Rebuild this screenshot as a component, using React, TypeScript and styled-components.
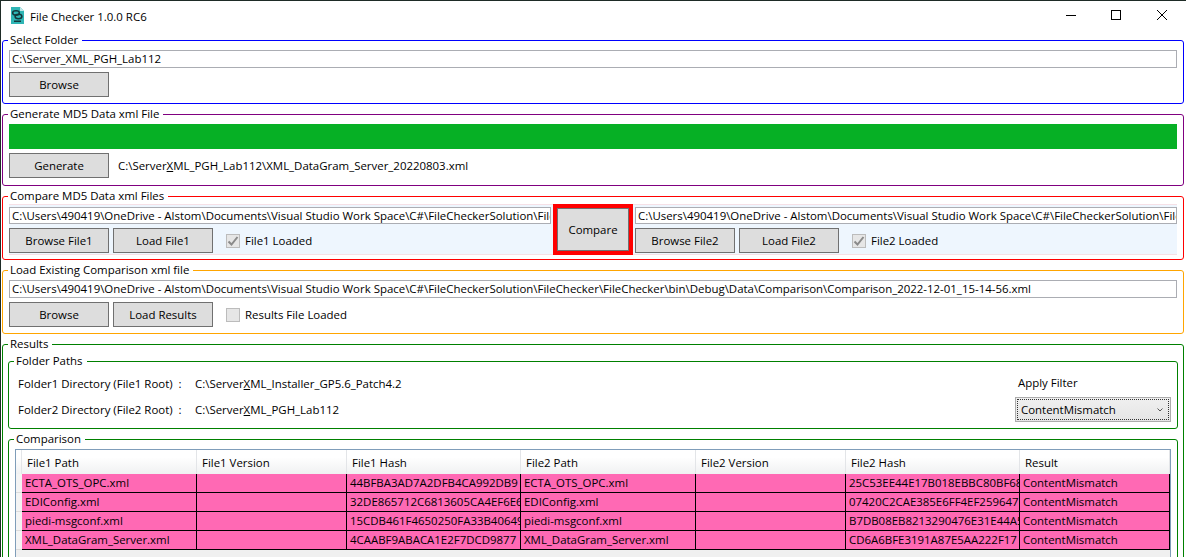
import React from "react";
import styled, { createGlobalStyle } from "styled-components";

const Global = createGlobalStyle`
  html, body { margin: 0; padding: 0; background: #fff; }
  body { font-family: "Open Sans", "Noto Sans", sans-serif; font-size: 11.45px; color: #000; }
  * { box-sizing: border-box; }
`;

const Win = styled.div`
  width: 1186px; height: 557px; overflow: hidden; display: flex; flex-direction: column;
  background: #fff; border-top: 1px solid #1e2b26; border-left: 1px solid #1e2b26;
`;
const TitleBar = styled.div`
  height: 31px; flex: none; display: flex; align-items: center; padding-left: 10px; gap: 6px;
`;
const TitleIcon = styled.span` display: flex; margin-bottom: 3px; `;
const TitleText = styled.span` flex: 1; margin-bottom: 1px; `;
const WinButtons = styled.div`
  display: flex; padding-right: 19px; gap: 35px; align-items: center; margin-bottom: 3px;
  svg:nth-child(2) { margin-right: 1px; }
`;

const Group = styled.fieldset<{ $c: string }>`
  flex: none; margin: 0 2px 2px 1px; padding: 2px 6px 6px; border: 1px solid ${p => p.$c}; border-radius: 3px; min-width: 0;
`;
const GenerateGroup = styled(Group)` padding-bottom: 7px; `;
const CompareGroup = styled(Group)` padding: 0 6px 4px; `;
const ResultsGroup = styled(Group)` padding: 1px 5px 0; `;
const Sub = styled(Group)` margin: 0 0 2px 0; padding: 0 6px 6px; `;
const Legend = styled.legend`
  margin-left: -1px; padding: 0 4px 0 2px; line-height: 16px; height: 16px; white-space: nowrap;
`;
const ResultsLegend = styled(Legend)` margin-left: 0; `;
const Input = styled.div`
  height: 18px; border: 1px solid #abadb3; background: #fff; padding-left: 2px; line-height: 16px;
  white-space: nowrap; overflow: hidden; min-width: 0;
`;
const CompactInput = styled(Input)` height: 17px; line-height: 15px; `;
const Row = styled.div` display: flex; align-items: center; gap: 4px; margin-top: 4px; height: 25px; `;
const Btn = styled.button`
  width: 100px; height: 25px; border: 1px solid #707070; background: #dddddd; font: inherit; color: #000; padding: 0; flex: none;
`;
const Check = styled.label`
  display: flex; align-items: center; gap: 5px; margin-left: 9px; white-space: nowrap;
`;
const Box = styled.span`
  width: 14px; height: 14px; border: 1px solid #bcbcbc; background: #e6e6e6; display: flex; align-items: center; justify-content: center;
`;
const Progress = styled.div` height: 25px; background: #06b025; `;
const PathLabel = styled.span` margin-left: 5px; white-space: nowrap; `;

const ComparePanel = styled.div`
  display: flex; align-items: stretch; gap: 2px; height: 51px;
  background: #eef6fe; border-top: 1px solid #f6e0e6; border-bottom: 1px solid #f6e0e6;
`;
const Side = styled.div` flex: 1; min-width: 0; padding-top: 2px; `;
const CompareBtn = styled.button`
  width: 80px; height: 51px; flex: none; border: 4px solid #ff0000; margin-top: -1px; background: #dddddd;
  box-shadow: inset 0 0 0 1px #707070; font: inherit; color: #000; padding: 0;
`;

const PathsGrid = styled.div`
  display: flex; justify-content: space-between; height: 53px;
`;
const PathsLeft = styled.div`
  display: grid; grid-template-columns: 177px auto; grid-auto-rows: 26px; padding: 1px 0 0 3px; align-content: start; align-items: center;
`;
const Filter = styled.div` width: 156px; padding-top: 6px; `;
const FilterLabel = styled.div` padding-left: 3px; line-height: 16px; height: 22px; `;
const Select = styled.div`
  height: 25px; border: 1px solid #acacac; background: linear-gradient(#f0f0f0, #e5e5e5); padding: 1px;
`;
const SelectInner = styled.div`
  height: 21px; border: 1px dotted #333; padding: 0 5px 0 3px; display: flex; justify-content: space-between; align-items: center;
`;

const Table = styled.div`
  height: 140px; margin-top: 2px; background: #f0f0f0; border: 1px solid #7f9db9; border-bottom: 0; overflow: hidden;
`;
const cols = "175px 150px 174px 175px 150px 174px 150px";
const Head = styled.div`
  display: grid; grid-template-columns: 6px ${cols}; height: 24px; background: linear-gradient(#fff 0 30%, #f0f1f2);
`;
const HeadCell = styled.div`
  padding-left: 5px; line-height: 26px; border-right: 1px solid #e3e5e8; white-space: nowrap; overflow: hidden;
`;
const DataRow = styled.div`
  display: grid; grid-template-columns: 6px ${cols}; height: 19px;
`;
const Gutter = styled.div` border-bottom: 1px solid #dcdcdc; background: #f4f4f4; `;
const Cell = styled.div`
  background: #ff69b4; border-right: 1px solid #000; border-bottom: 1px solid #000; padding-left: 3px; line-height: 18px;
  white-space: nowrap; overflow: hidden;
`;

const heads = ["File1 Path", "File1 Version", "File1 Hash", "File2 Path", "File2 Version", "File2 Hash", "Result"];
const rows = [
  ["ECTA_OTS_OPC.xml", "", "44BFBA3AD7A2DFB4CA992DB9", "ECTA_OTS_OPC.xml", "", "25C53EE44E17B018EBBC80BF68", "ContentMismatch"],
  ["EDIConfig.xml", "", "32DE865712C6813605CA4EF6E6", "EDIConfig.xml", "", "07420C2CAE385E6FF4EF259647", "ContentMismatch"],
  ["piedi-msgconf.xml", "", "15CDB461F4650250FA33B40649", "piedi-msgconf.xml", "", "B7DB08EB8213290476E31E44A5", "ContentMismatch"],
  ["XML_DataGram_Server.xml", "", "4CAABF9ABACA1E2F7DCD9877", "XML_DataGram_Server.xml", "", "CD6A6BFE3191A87E5AA222F17", "ContentMismatch"],
];

const longPath = "C:\\Users\\490419\\OneDrive - Alstom\\Documents\\Visual Studio Work Space\\C#\\FileCheckerSolution\\FileChecker\\FileChecker\\bin\\Debug\\Data";

const AppIcon = () => (
  <svg width="13" height="17" viewBox="0 0 13 17">
    <path d="M0 0h9l4 4v13H0z" fill="#2fb5b5" />
    <path d="M9 0l4 4H9z" fill="#bfe8e8" />
    <ellipse cx="5" cy="6" rx="3.4" ry="2.2" fill="none" stroke="#14383c" strokeWidth="1.5" />
    <ellipse cx="7.5" cy="9.5" rx="3.4" ry="2.2" fill="none" stroke="#14383c" strokeWidth="1.5" />
    <rect x="3" y="13.5" width="7" height="1.5" fill="#14383c" />
  </svg>
);
const Tick = () => (
  <svg width="12" height="12" viewBox="0 0 12 12">
    <path d="M1.5 6.5l3 3 6-7.5" fill="none" stroke="#8a8a8a" strokeWidth="2" />
  </svg>
);

export default function App() {
  return (
    <Win>
      <Global />
      <TitleBar>
        <TitleIcon><AppIcon /></TitleIcon>
        <TitleText>File Checker 1.0.0 RC6</TitleText>
        <WinButtons>
          <svg width="10" height="10" viewBox="0 0 10 10"><path d="M0 5.5h10" stroke="#000" /></svg>
          <svg width="10" height="10" viewBox="0 0 10 10"><rect x=".5" y=".5" width="9" height="9" fill="none" stroke="#000" /></svg>
          <svg width="10" height="10" viewBox="0 0 10 10"><path d="M0 0l10 10M10 0L0 10" stroke="#000" /></svg>
        </WinButtons>
      </TitleBar>

      <Group $c="#0000ff">
        <Legend>Select Folder</Legend>
        <Input>C:\Server_XML_PGH_Lab112</Input>
        <Row><Btn>Browse</Btn></Row>
      </Group>

      <GenerateGroup $c="#800080">
        <Legend>Generate MD5 Data xml File</Legend>
        <Progress />
        <Row>
          <Btn>Generate</Btn>
          <PathLabel>C:\Server<u>X</u>ML_PGH_Lab112\XML_DataGram_Server_20220803.xml</PathLabel>
        </Row>
      </GenerateGroup>

      <CompareGroup $c="#ff0000">
        <Legend>Compare MD5 Data xml Files</Legend>
        <ComparePanel>
          <Side>
            <CompactInput>{longPath}</CompactInput>
            <Row>
              <Btn>Browse File1</Btn>
              <Btn>Load File1</Btn>
              <Check><Box><Tick /></Box>File1 Loaded</Check>
            </Row>
          </Side>
          <CompareBtn>Compare</CompareBtn>
          <Side>
            <CompactInput>{longPath}</CompactInput>
            <Row>
              <Btn>Browse File2</Btn>
              <Btn>Load File2</Btn>
              <Check><Box><Tick /></Box>File2 Loaded</Check>
            </Row>
          </Side>
        </ComparePanel>
      </CompareGroup>

      <Group $c="#ffa500">
        <Legend>Load Existing Comparison xml file</Legend>
        <Input>C:\Users\490419\OneDrive - Alstom\Documents\Visual Studio Work Space\C#\FileCheckerSolution\FileChecker\FileChecker\bin\Debug\Data\Comparison\Comparison_2022-12-01_15-14-56.xml</Input>
        <Row>
          <Btn>Browse</Btn>
          <Btn>Load Results</Btn>
          <Check><Box />Results File Loaded</Check>
        </Row>
      </Group>

      <ResultsGroup $c="#008000">
        <ResultsLegend>Results</ResultsLegend>
        <Sub $c="#008000">
          <Legend>Folder Paths</Legend>
          <PathsGrid>
            <PathsLeft>
              <span>Folder1 Directory (File1 Root)&nbsp;&nbsp;:</span>
              <span>C:\Server<u>X</u>ML_Installer_GP5.6_Patch4.2</span>
              <span>Folder2 Directory (File2 Root)&nbsp;&nbsp;:</span>
              <span>C:\Server<u>X</u>ML_PGH_Lab112</span>
            </PathsLeft>
            <Filter>
              <FilterLabel>Apply Filter</FilterLabel>
              <Select>
                <SelectInner>
                  ContentMismatch
                  <svg width="6" height="4" viewBox="0 0 6 4"><path d="M.5.5L3 3 5.5.5" fill="none" stroke="#555" /></svg>
                </SelectInner>
              </Select>
            </Filter>
          </PathsGrid>
        </Sub>
        <Sub $c="#008000">
          <Legend>Comparison</Legend>
          <Table>
            <Head>
              <HeadCell />
              {heads.map(h => <HeadCell key={h}>{h}</HeadCell>)}
            </Head>
            {rows.map(r => (
              <DataRow key={r[0]}>
                <Gutter />
                {r.map((c, i) => <Cell key={i}>{c}</Cell>)}
              </DataRow>
            ))}
          </Table>
        </Sub>
      </ResultsGroup>
    </Win>
  );
}
